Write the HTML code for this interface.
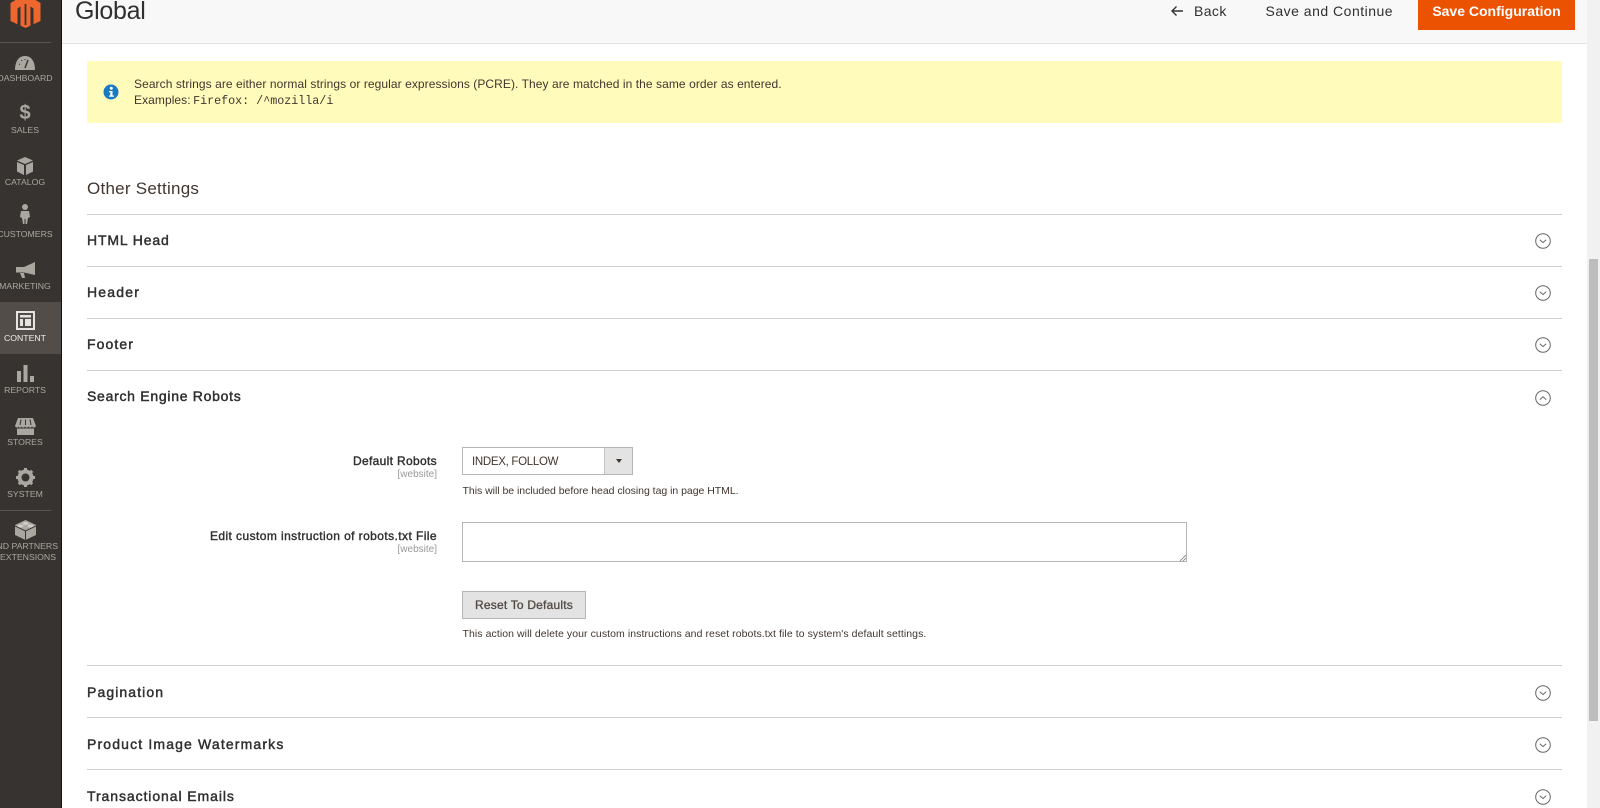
<!DOCTYPE html>
<html><head><meta charset="utf-8"><title>Global</title>
<style>
html,body{margin:0;padding:0;width:1600px;height:808px;overflow:hidden;background:#fff;font-family:"Liberation Sans",sans-serif;color:#303030}
#r{position:absolute;left:0;top:0;width:1600px;height:808px;overflow:hidden;filter:blur(.35px)}
.a{position:absolute;white-space:nowrap}
.side{position:absolute;left:0;top:0;width:61px;height:808px;background:#373330;border-right:1.5px solid #111}
.nl{position:absolute;left:-25px;width:100px;text-align:center;color:#aaa6a0;font-size:8.7px;line-height:12px;white-space:nowrap}
.hr{position:absolute;left:87px;width:1475px;height:1px;background:#cfcfcf}
.t{position:absolute;left:87px;font-size:14px;font-weight:normal;color:#303030;line-height:20px;letter-spacing:.72px;white-space:nowrap;-webkit-text-stroke:.45px #303030}
.lb{right:1163px;font-size:12px;line-height:16px;color:#303030;letter-spacing:.42px;-webkit-text-stroke:.4px #303030}
.ic{position:absolute;left:1535px;width:16px;height:16px}
svg{display:block}
</style></head><body><div id="r">
<div class="a" style="left:62px;top:0;width:1525px;height:43px;background:#f8f8f8;border-bottom:1px solid #e3e3e3"></div>
<div class="side"></div>
<svg class="a" style="left:0;top:0" width="50" height="32" viewBox="0 0 50 32"><path d="M25.500-6L40.500 3V21L25.500 28 10.500 21V3z" fill="#ee672f"/><path d="M17.500 8.500L20.500 6.500V30H17.500zM30.500 6.500L33.500 8.500V30H30.500zM24.600 4H26.400V25H24.600z" fill="#373330"/></svg>
<div class="a" style="left:0;top:42px;width:51px;height:1px;background:#5a5551"></div>
<div class="a" style="left:0;top:302px;width:61px;height:52px;background:#524d49"></div>
<div class="a" style="left:0;top:510px;width:51px;height:1px;background:#5a5551"></div>

<svg class="a" style="left:15px;top:56px" width="20" height="15" viewBox="0 0 20 15"><path d="M0 14C0 5 4 0 10 0s10 5 10 14z" fill="#aaa6a0"/><path d="M10 12L13 4" stroke="#373330" stroke-width="1.500"/><path d="M4 8l1 .5M6.500 4l.5 1M10 3v1" stroke="#373330"/></svg>
<div class="nl" style="top:72px">DASHBOARD</div>
<div class="a" style="left:15px;width:20px;text-align:center;top:101px;font-size:20px;line-height:24px;font-weight:bold;color:#aaa6a0">$</div>
<div class="nl" style="top:124px">SALES</div>
<svg class="a" style="left:17px;top:157px" width="16" height="18" viewBox="0 0 16 18"><path d="M8 0l8 3.500-8 3.500-8-3.500z" fill="#aaa6a0"/><path d="M0 5l7 3v10l-7-3.500zM16 5l-7 3v10l7-3.500z" fill="#aaa6a0"/></svg>
<div class="nl" style="top:176px">CATALOG</div>
<svg class="a" style="left:20px;top:204px" width="10" height="20" viewBox="0 0 10 20"><circle cx="5" cy="3" r="3" fill="#aaa6a0"/><path d="M1 7h8l1 6-2 1-1 6H5.500v-5h-1v5H3l-1-6-2-1z" fill="#aaa6a0"/></svg>
<div class="nl" style="top:228px">CUSTOMERS</div>
<svg class="a" style="left:16px;top:262px" width="19" height="16" viewBox="0 0 19 16"><path d="M19 0v13L8 10.500H0V5h8z" fill="#aaa6a0"/><path d="M4 11h4l1 5H6z" fill="#aaa6a0"/></svg>
<div class="nl" style="top:280px">MARKETING</div>
<svg class="a" style="left:16px;top:311px" width="19" height="19" viewBox="0 0 19 19"><rect x="1" y="1" width="17" height="17" fill="none" stroke="#e6e4e2" stroke-width="2"/><rect x="4" y="4" width="11" height="2.500" fill="#e6e4e2"/><rect x="4" y="8" width="3" height="7" fill="#e6e4e2"/><rect x="9" y="8" width="6" height="7" fill="#e6e4e2"/></svg>
<div class="nl" style="top:332px;color:#f0eeec">CONTENT</div>
<svg class="a" style="left:17px;top:365px" width="17" height="17" viewBox="0 0 17 17"><rect x="0" y="6" width="4" height="11" fill="#aaa6a0"/><rect x="6.500" y="0" width="4" height="17" fill="#aaa6a0"/><rect x="13" y="11" width="4" height="6" fill="#aaa6a0"/></svg>
<div class="nl" style="top:384px">REPORTS</div>
<svg class="a" style="left:15px;top:418px" width="21" height="17" viewBox="0 0 21 17"><path d="M3 0h15l3 8c-1 2-3 2-4 .5-1 1.500-3 1.500-3.500 0-1 1.500-3 1.500-3.500 0-1 1.500-3 1.500-3.500 0C6 10 4 10 3.500 8.500 2.500 10 1 10 0 8z" fill="#aaa6a0"/><path d="M2 10.500h17V17H2z" fill="#aaa6a0"/><path d="M6 1.500L5 7M10.500 1.500V7M15 1.500L16 7" stroke="#373330"/></svg>
<div class="nl" style="top:436px">STORES</div>
<svg class="a" style="left:16px;top:468px" width="19" height="19" viewBox="0 0 19 19"><circle cx="9.500" cy="9.500" r="6" fill="none" stroke="#aaa6a0" stroke-width="4"/><path d="M9.500 0v19M0 9.500h19M2.800 2.800l13.400 13.400M16.200 2.800L2.800 16.200" stroke="#aaa6a0" stroke-width="3" stroke-dasharray="3.500 12 3.500 0"/></svg>
<div class="nl" style="top:488px">SYSTEM</div>
<svg class="a" style="left:15px;top:520px" width="21" height="20" viewBox="0 0 21 20"><path d="M10.500 0L21 5v10l-10.500 5L0 15V5z" fill="#aaa6a0"/><path d="M0 6l10.500 5L21 6M10.500 11v9" stroke="#373330" fill="none"/><ellipse cx="10.500" cy="3.500" rx="3" ry="1.500" fill="#d0cdc9"/><ellipse cx="5.500" cy="6" rx="3" ry="1.500" fill="#d0cdc9"/><ellipse cx="15.500" cy="6" rx="3" ry="1.500" fill="#d0cdc9"/></svg>
<div class="nl" style="top:540px;left:-42px;text-align:right">ND PARTNERS</div>
<div class="nl" style="top:551px;left:-44px;text-align:right">&amp; EXTENSIONS</div>

<div class="a" style="left:75px;top:-4px;font-size:25px;line-height:30px;color:#303030;letter-spacing:-.3px">Global</div>
<svg class="a" style="left:1170px;top:5px" width="14" height="12" viewBox="0 0 14 12"><path d="M13 6H2M6.500 1.500L2 6l4.500 4.500" fill="none" stroke="#333" stroke-width="1.400"/></svg>
<div class="a" style="left:1194px;top:1px;font-size:14px;line-height:20px;letter-spacing:.4px">Back</div>
<div class="a" style="left:1265.500px;top:1px;font-size:14px;line-height:20px;letter-spacing:.5px">Save and Continue</div>
<div class="a" style="left:1418px;top:-2px;width:157px;height:32px;background:#eb5202"></div>
<div class="a" style="left:1418px;top:1px;width:157px;text-align:center;font-size:14px;line-height:20px;letter-spacing:0;font-weight:bold;color:#fff">Save Configuration</div>

<div class="a" style="left:87px;top:60.500px;width:1475px;height:62.500px;background:#fffbbb"></div>
<svg class="a" style="left:103px;top:84px" width="16" height="16" viewBox="0 0 16 16"><circle cx="8" cy="8" r="7.500" fill="#1979c3"/><circle cx="8.300" cy="4.300" r="1.500" fill="#fff"/><path d="M6 7h3.500v4.500H11v1.200H6v-1.200h1.300V8.200H6z" fill="#fff"/></svg>
<div class="a" style="left:134px;top:76px;font-size:12px;line-height:16px;color:#41362f;letter-spacing:.07px">Search strings are either normal strings or regular expressions (PCRE). They are matched in the same order as entered.</div>
<div class="a" style="left:134px;top:92px;font-size:12px;line-height:16px;color:#41362f;letter-spacing:.07px">Examples: <span style="font-family:'Liberation Mono',monospace;letter-spacing:0;font-size:11.700px;margin-left:-1px">Firefox: /^mozilla/i</span></div>

<div class="a" style="left:87px;top:178px;font-size:17px;line-height:22px;color:#41362f;letter-spacing:.25px">Other Settings</div>

<div class="hr" style="top:214px"></div><div class="hr" style="top:266px"></div><div class="hr" style="top:318px"></div><div class="hr" style="top:370px"></div>
<div class="hr" style="top:665px"></div><div class="hr" style="top:717px"></div><div class="hr" style="top:769px"></div>

<div class="t" style="top:230px;letter-spacing:.85px">HTML Head</div>
<div class="t" style="top:282px;letter-spacing:1.2px">Header</div>
<div class="t" style="top:334px;letter-spacing:1.1px">Footer</div>
<div class="t" style="top:386px">Search Engine Robots</div>
<div class="t" style="top:682px;letter-spacing:1.1px">Pagination</div>
<div class="t" style="top:734px;letter-spacing:1.15px">Product Image Watermarks</div>
<div class="t" style="top:786px;letter-spacing:.92px">Transactional Emails</div>

<svg class="ic" style="top:233px" viewBox="0 0 16 16"><circle cx="8" cy="8" r="7.300" fill="none" stroke="#666" stroke-width="1"/><path d="M4.800 6.800L8 9.600l3.200-2.800" fill="none" stroke="#666"/></svg>
<svg class="ic" style="top:285px" viewBox="0 0 16 16"><circle cx="8" cy="8" r="7.300" fill="none" stroke="#666" stroke-width="1"/><path d="M4.800 6.800L8 9.600l3.200-2.800" fill="none" stroke="#666"/></svg>
<svg class="ic" style="top:337px" viewBox="0 0 16 16"><circle cx="8" cy="8" r="7.300" fill="none" stroke="#666" stroke-width="1"/><path d="M4.800 6.800L8 9.600l3.200-2.800" fill="none" stroke="#666"/></svg>
<svg class="ic" style="top:390px" viewBox="0 0 16 16"><circle cx="8" cy="8" r="7.300" fill="none" stroke="#666" stroke-width="1"/><path d="M4.800 9.600L8 6.800l3.200 2.800" fill="none" stroke="#666"/></svg>
<svg class="ic" style="top:685px" viewBox="0 0 16 16"><circle cx="8" cy="8" r="7.300" fill="none" stroke="#666" stroke-width="1"/><path d="M4.800 6.800L8 9.600l3.200-2.800" fill="none" stroke="#666"/></svg>
<svg class="ic" style="top:737px" viewBox="0 0 16 16"><circle cx="8" cy="8" r="7.300" fill="none" stroke="#666" stroke-width="1"/><path d="M4.800 6.800L8 9.600l3.200-2.800" fill="none" stroke="#666"/></svg>
<svg class="ic" style="top:789px" viewBox="0 0 16 16"><circle cx="8" cy="8" r="7.300" fill="none" stroke="#666" stroke-width="1"/><path d="M4.800 6.800L8 9.600l3.200-2.800" fill="none" stroke="#666"/></svg>

<div class="a lb" style="top:453px;letter-spacing:.33px">Default Robots</div>
<div class="a" style="right:1163px;top:469px;font-size:10px;line-height:12px;color:#999">[website]</div>
<div class="a lb" style="top:528px">Edit custom instruction of robots.txt File</div>
<div class="a" style="right:1163px;top:544px;font-size:10px;line-height:12px;color:#999">[website]</div>

<div class="a" style="left:462px;top:447px;width:169px;height:26px;border:1px solid #b5b5b5;background:#fff"></div>
<div class="a" style="left:604px;top:448px;width:28px;height:26px;background:#e3e3e3;border-left:1px solid #c4c4c4;box-sizing:border-box"></div>
<div class="a" style="left:615.500px;top:459px;width:0;height:0;border-left:3.500px solid transparent;border-right:3.500px solid transparent;border-top:4px solid #41362f"></div>
<div class="a" style="left:472px;top:454px;font-size:11.500px;line-height:16px;color:#41362f;letter-spacing:-.3px">INDEX, FOLLOW</div>
<div class="a" style="left:462.500px;top:483.500px;font-size:10.500px;line-height:14px;color:#41362f;letter-spacing:-.03px">This will be included before head closing tag in page HTML.</div>

<div class="a" style="left:462px;top:522px;width:723px;height:38px;border:1px solid #b5b5b5;background:#fff"></div>
<svg class="a" style="left:1179px;top:554px" width="8" height="8" viewBox="0 0 8 8"><path d="M1 7L7 1M4 7l3-3" stroke="#777" stroke-width=".8"/></svg>

<div class="a" style="left:462px;top:591px;width:122px;height:26px;border:1px solid #b5b5b5;background:#e3e3e3"></div>
<div class="a" style="left:462px;top:597px;width:124px;text-align:center;font-size:12px;line-height:16px;color:#514943;letter-spacing:.2px;-webkit-text-stroke:.3px #514943">Reset To Defaults</div>
<div class="a" style="left:462.500px;top:627px;font-size:10.500px;line-height:14px;color:#41362f;letter-spacing:.07px">This action will delete your custom instructions and reset robots.txt file to system's default settings.</div>

<div class="a" style="left:1587px;top:0;width:13px;height:808px;background:#f1f1f1"></div>
<div class="a" style="left:1589px;top:259px;width:9px;height:462px;background:#bdbdbd"></div>
</div></body></html>
